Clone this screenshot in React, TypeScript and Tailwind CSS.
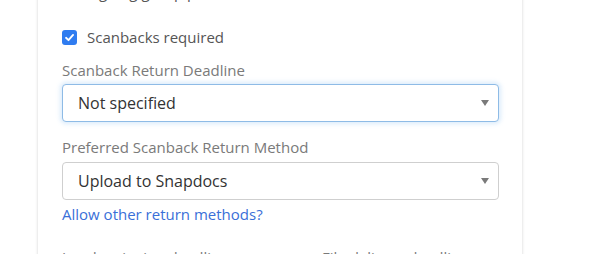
import React from "react";

const font = { fontFamily: '"Open Sans", "Liberation Sans", sans-serif' };

function Caret() {
  return (
    <svg width="8" height="6" viewBox="0 0 8 6" className="shrink-0">
      <path d="M0 0 L8 0 L4 6 Z" fill="#7a7a7a" />
    </svg>
  );
}

function Check({ checked }: { checked: boolean }) {
  return checked ? (
    <span className="flex h-[15px] w-[15px] shrink-0 items-center justify-center rounded-[3px] bg-[#2f7cf0]">
      <svg width="11" height="11" viewBox="0 0 12 12">
        <path d="M2.2 6.3 L4.9 8.9 L9.9 3.2" fill="none" stroke="#fff" strokeWidth="2" strokeLinecap="round" strokeLinejoin="round" />
      </svg>
    </span>
  ) : (
    <span className="h-[15px] w-[15px] shrink-0 rounded-[3px] border border-[#8a8a8a] bg-white" />
  );
}

function Select({ value, focused }: { value: string; focused?: boolean }) {
  return (
    <div
      className={
        "flex h-[38px] items-center justify-between rounded-[4px] border bg-white pl-[15px] pr-[9px] text-[16px] text-[#333] " +
        (focused
          ? "border-[#8ebbe6] shadow-[0_0_4px_2px_rgba(130,185,240,0.28)]"
          : "border-[#cfcfcf]")
      }
    >
      <span>{value}</span>
      <Caret />
    </div>
  );
}

export default function App() {
  return (
    <div className="h-[254px] w-[590px] overflow-hidden bg-white" style={font}>
      <div className="ml-[38px] h-[300px] w-[484px] bg-white px-[24px] pr-[23px] shadow-[0_0_3px_rgba(0,0,0,0.18)]">
        <div className="-mt-[18px] flex h-[20px] items-center gap-[10px] text-[15px] text-[#555]">
          <Check checked={false} />
          <span>Signing group preferred</span>
        </div>
        <div className="mt-[25px] flex h-[20px] items-center gap-[10px] text-[15px] text-[#555]">
          <Check checked={true} />
          <span>Scanbacks required</span>
        </div>
        <div className="mt-[12px] text-[15px] leading-[22px] text-[#7a7a7a]">Scanback Return Deadline</div>
        <div className="mt-[3px]">
          <Select value="Not specified" focused />
        </div>
        <div className="mt-[14px] text-[15px] leading-[22px] text-[#7a7a7a]">Preferred Scanback Return Method</div>
        <div className="mt-[4px]">
          <Select value="Upload to Snapdocs" />
        </div>
        <div className="mt-[3px] text-[15px] leading-[22px] text-[#3a6fd8]">Allow other return methods?</div>
        <div className="mt-[21px] flex text-[15px] leading-[22px] text-[#7a7a7a]">
          <div className="w-[260px]">Lender signing deadline</div>
          <div>File delivery deadline</div>
        </div>
      </div>
    </div>
  );
}
